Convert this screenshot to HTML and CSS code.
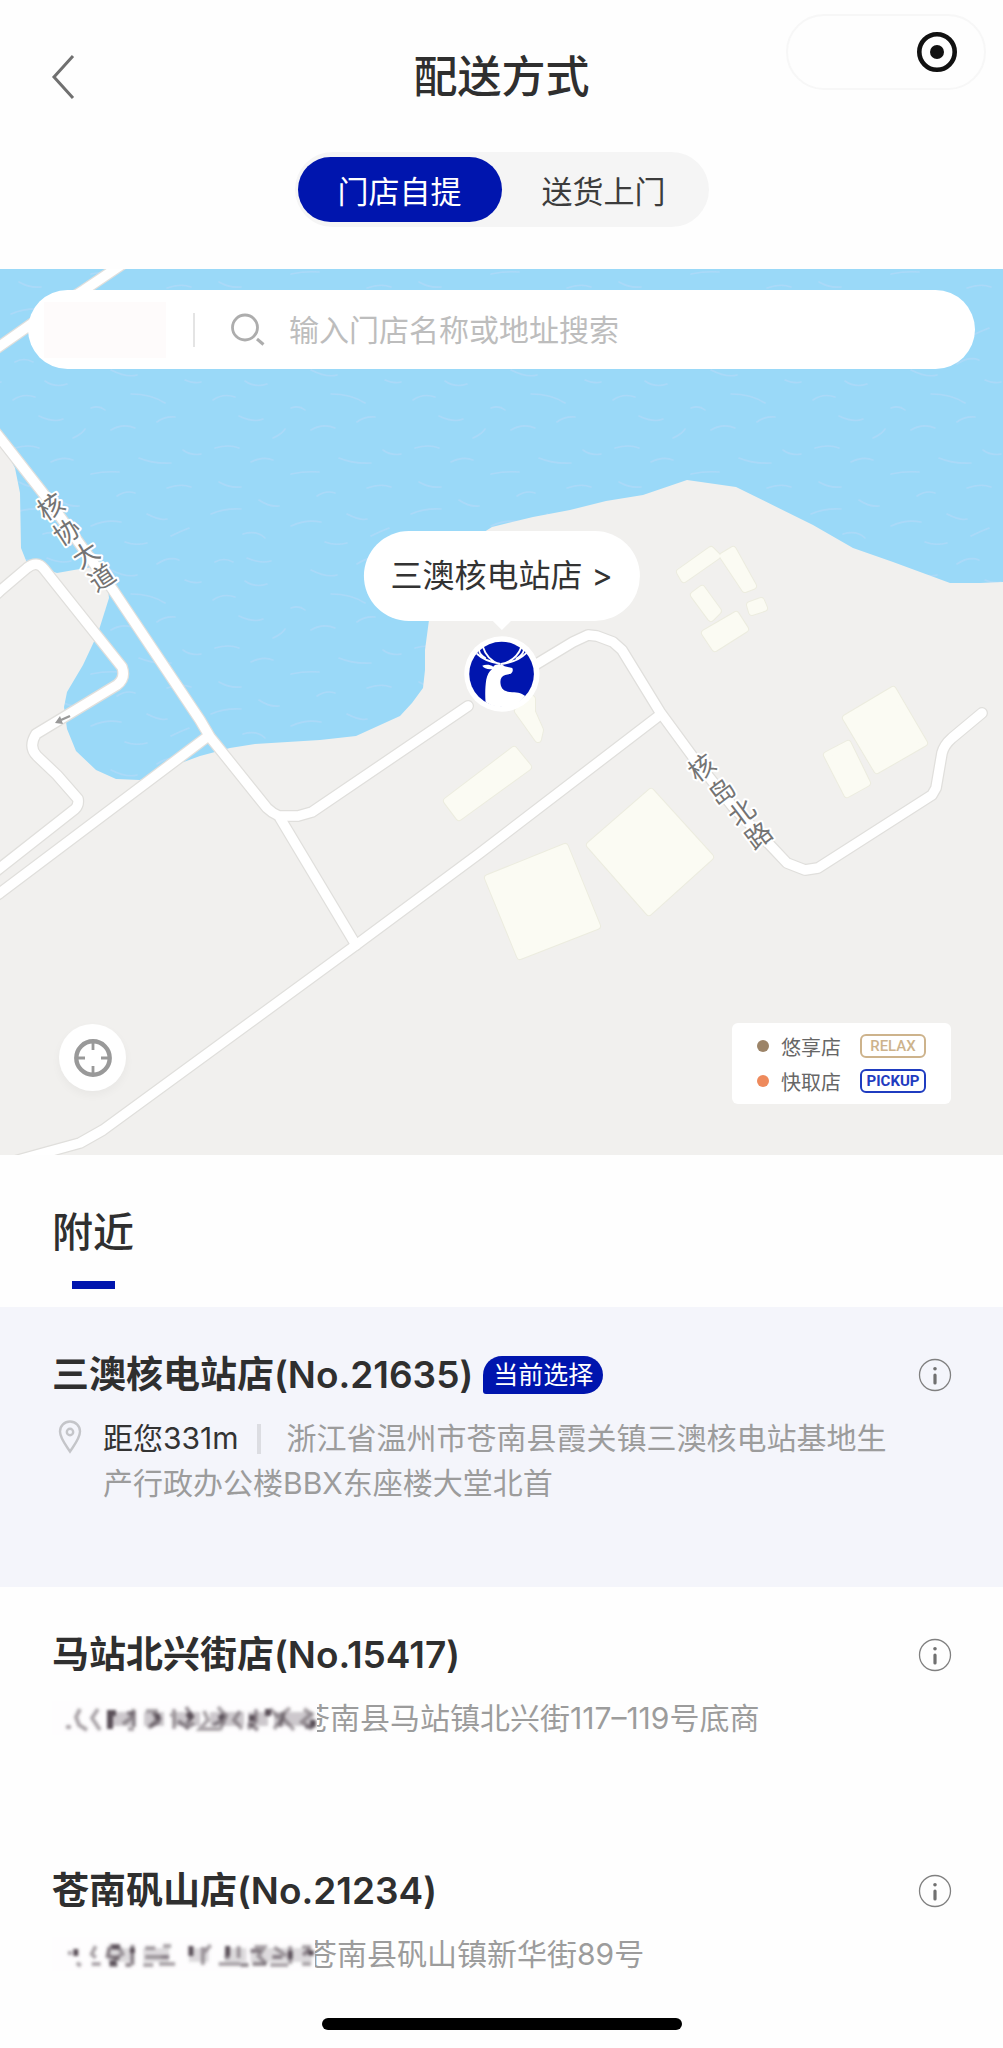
FILE: index.html
```html
<!DOCTYPE html>
<html lang="zh-CN">
<head>
<meta charset="utf-8">
<meta name="viewport" content="width=device-width, initial-scale=1">
<title>配送方式</title>
<link rel="stylesheet" href="styles.css">
</head>
<body>
<svg class="defs" aria-hidden="true">
  <defs>
    <symbol id="icon-info" viewBox="0 0 34 34">
      <circle cx="17" cy="17" r="15.5" fill="none" stroke="#808080" stroke-width="1.3"/>
      <circle cx="17" cy="10.8" r="1.8" fill="#707070"/>
      <path d="M17 17v8" stroke="#707070" stroke-width="3.2" stroke-linecap="round"/>
    </symbol>
    <filter id="soft" x="-5%" y="-20%" width="110%" height="140%"><feGaussianBlur stdDeviation="1.7"/></filter>
  </defs>
</svg>

<header class="header">
  <div class="nav">
    <button class="back" type="button" aria-label="返回">
      <svg viewBox="0 0 26 46" width="26" height="46"><path d="M23 2L4 23l19 21" fill="none" stroke="#707070" stroke-width="3"/></svg>
    </button>
    <h1 class="title">配送方式</h1>
  </div>
  <div class="capsule">
    <button class="capsule-close" type="button" aria-label="关闭">
      <svg viewBox="0 0 42 42" width="42" height="42"><circle cx="21" cy="21" r="17.7" fill="none" stroke="#111" stroke-width="4.6"/><circle cx="21" cy="21" r="7" fill="#111"/></svg>
    </button>
  </div>
  <div class="tabs">
    <button class="tab tab-active" type="button">门店自提</button>
    <button class="tab" type="button">送货上门</button>
  </div>
</header>

<section class="map">
  <svg class="map-canvas" viewBox="0 269 1003 886" preserveAspectRatio="xMidYMid slice" aria-hidden="true">
    <defs>
      <pattern id="waves" width="200" height="200" patternUnits="userSpaceOnUse" patternTransform="translate(7 350)">
        <rect width="200" height="200" fill="#9ad9f8"/>
        <g fill="none" stroke="#b0d9f8" stroke-width="1.6" stroke-linecap="round" opacity=".75">
          <path d="M8 12q9-5 18 0M40 8q14 6 24 3M104 20q16 8 26 5M150 14q12-8 22-4M178 30q9 4 16 2M60 34q-12 4-22-3M124 44q20 0 34 9M6 50q10-7 22-3M84 58q8-3 14 2M32 66q15 7 24 3M150 72q8-6 18-5M104 80q12-7 24-2M66 88q9-4 12-9M8 98q14-4 24 0M176 100q8 6 18 4M132 108q14 6 32 5M44 112q12-6 22-2M84 124q14-3 28-2M12 132q10 6 22 5M160 138q14-5 24-1M110 146q9-6 18-3M52 150q10 7 20 6M4 164q14-6 30-5M140 164q14 7 20 5M84 176q15-7 30-4M182 178q-10 4-18 8M36 184q14-4 22 4M118 192q10 4 22 1"/>
        </g>
      </pattern>
      <g id="road-lines">
        <path d="M-10 353L40 318 84 290 130 259"/>
        <path d="M-10 425L0 438 43 493 113 590 200 720 210 737 267 808Q272 813 279 816L298 816 312 812 468 706"/>
        <path d="M280 818L356 945"/>
        <path d="M-10 900L0 893 207 737"/>
        <path d="M-10 600L0 591 27 568Q37 560 44 569L122 667Q126 678 117 685L36 734Q28 747 37 756L57 775 78 799Q79 805 75 809L0 868 -10 876"/>
        <path d="M-10 1168L40 1154 80 1143 103 1130 356 945 480 853 660 715"/>
        <path d="M530 668L573 642 588 635 597 636 613 642 622 650 660 712 693 757 733 807 770 845 787 863 805 870 818 868 932 795 936 788 942 753Q944 745 952 738L982 713"/>
      </g>
      <g id="buildings">
        <path d="M711 550L717 556 684 579 680 572Z"/>
        <path d="M723 556L733 550 753 586 745 589Z"/>
        <path d="M694 595L702 589 718 611 711 618Z"/>
        <path d="M750 605L761 601 764 608 752 612Z"/>
        <path d="M705 633L736 615 745 629 715 648Z"/>
        <path d="M846 718L893 690 924 743 877 770Z"/>
        <path d="M827 755L848 744 867 783 847 794Z"/>
        <path d="M651 792L710 857 649 912 590 845Z"/>
        <path d="M488 878L565 847 597 926 520 956Z"/>
        <path d="M514 750L528 767 459 817 447 801Z"/>
        <path d="M518 711L532 699 532 712 540 730 538 739Z"/>
      </g>
    </defs>
    <rect y="269" width="1003" height="886" fill="#f1f0ee"/>
    <path fill="url(#waves)" d="M0 269H1003V582L980 583 950 583 893 562 853 548 813 525 736 487 687 480 643 495 606 501 570 510 533 517 492 527 440 560 429 620 425 650 425 670 423 688 412 703 400 716 356 736 320 740 255 744 230 748 200 756 181 763 140 780 116 779 96 770 76 751 67 729 64 707 67 692 83 665 98 633 109 598 105 565 74 570 57 573 27 563 21 548 20 493 15 468 0 440Z"/>
    <use href="#buildings" fill="none" stroke="#ececdf" stroke-width="8" stroke-linejoin="round"/>
    <use href="#buildings" fill="#fbfbf3" stroke="#fbfbf3" stroke-width="6" stroke-linejoin="round"/>
    <use href="#road-lines" fill="none" stroke="#e0dfdc" stroke-width="12" stroke-linejoin="round" stroke-linecap="round"/>
    <use href="#road-lines" fill="none" stroke="#fff" stroke-width="9.500" stroke-linejoin="round" stroke-linecap="round"/>
    <path d="M70 716l-9 4" stroke="#999" stroke-width="2.4"/><path d="M55 723l5-7 3 8z" fill="#999"/>
    <g class="road-name">
      <text transform="translate(51 507) rotate(-33)" y="9">核</text>
      <text transform="translate(67 532) rotate(-33)" y="9">协</text>
      <text transform="translate(86 555) rotate(-33)" y="9">大</text>
      <text transform="translate(102 578) rotate(-33)" y="9">道</text>
      <text transform="translate(702 768) rotate(-37)" y="9">核</text>
      <text transform="translate(722 792) rotate(-37)" y="9">岛</text>
      <text transform="translate(742 813) rotate(-37)" y="9">北</text>
      <text transform="translate(759 836) rotate(-37)" y="9">路</text>
    </g>
  </svg>

  <form class="search">
    <span class="city"></span>
    <svg class="search-icon" viewBox="0 0 34 34" width="34" height="34"><circle cx="14" cy="14.5" r="12.5" fill="none" stroke="#adadad" stroke-width="2.8"/><path d="M26 26l6.500 5.500" stroke="#adadad" stroke-width="3"/></svg>
    <input class="search-input" type="search" aria-label="搜索门店" placeholder="输入门店名称或地址搜索">
  </form>

  <div class="pin">
    <a class="bubble" href="#store-21635">三澳核电站店 &gt;</a>
    <svg class="marker" viewBox="12 14 228 228" width="76" height="76" aria-hidden="true">
      <circle cx="126" cy="128" r="113" fill="#fff"/>
      <circle cx="125" cy="128" r="97" fill="#0015ae"/>
      <g fill="none" stroke="#fff" stroke-linecap="round">
        <path d="M118 98C96 90 78 76 69 46M119 97C92 92 68 84 52 68M76 80C64 72 58 64 58 58" stroke-width="5.500"/>
        <path d="M124 98C150 92 172 80 184 48M124 98C156 94 180 84 198 66M170 82C184 74 190 66 192 56" stroke-width="5.500"/>
      </g>
      <path fill="#fff" d="M100 106C90 99 77 99 67 103C72 111 84 115 97 113C87 120 82 132 79 145C76 165 75 188 77 212C96 226 120 228 142 226C165 222 184 210 196 194C184 184 168 183 150 182C132 180 124 172 122 158C120 144 124 134 136 131L153 127C159 122 160 115 157 110L134 105C128 98 108 95 100 106Z"/>
    </svg>
  </div>

  <div class="map-footer">
    <button class="locate" type="button" aria-label="定位">
      <svg viewBox="0 0 38 38" width="38" height="38" fill="none" stroke="#999"><circle cx="19" cy="19" r="16.700" stroke-width="4.400"/><path d="M19 3v8M19 27v8M3 19h8M27 19h8" stroke-width="2.800"/></svg>
    </button>
    <ul class="legend">
      <li><i class="dot dot-relax"></i><span>悠享店</span><b class="tag tag-relax">RELAX</b></li>
      <li><i class="dot dot-pickup"></i><span>快取店</span><b class="tag tag-pickup">PICKUP</b></li>
    </ul>
  </div>
</section>

<main class="stores">
  <h2 class="section-title">附近</h2>

  <article class="store store-current" id="store-21635">
    <div class="store-head">
      <h3 class="store-name">三澳核电站店(No.21635)</h3>
      <span class="badge">当前选择</span>
      <button class="info" type="button" aria-label="门店详情"><svg width="34" height="34"><use href="#icon-info"/></svg></button>
    </div>
    <div class="store-address">
      <svg class="pin-icon" viewBox="0 0 24 34" width="24" height="34" fill="none" stroke="#c4c5c9" stroke-width="2.400"><path d="M12 31.500C7 24 2 18 2 11.500A10 10 0 0 1 22 11.500C22 18 17 24 12 31.500Z"/><circle cx="12" cy="12" r="3.200"/></svg>
      <p class="address"><span class="distance">距您331m</span>浙江省温州市苍南县霞关镇三澳核电站基地生产行政办公楼BBX东座楼大堂北首</p>
    </div>
  </article>

  <article class="store">
    <div class="store-head">
      <h3 class="store-name">马站北兴街店(No.15417)</h3>
      <button class="info" type="button" aria-label="门店详情"><svg width="34" height="34"><use href="#icon-info"/></svg></button>
    </div>
    <div class="store-address">
      <svg class="redacted" viewBox="0 0 265 34" width="265" height="34" aria-hidden="true">
        <rect width="265" height="34" fill="#fefdfe"/>
        <g filter="url(#soft)" fill="none" stroke="#5a5058" stroke-width="4">
          <path opacity=".3" stroke-width="14" d="M56 18h26M92 18h20M122 18h26M158 18h34M196 18h20M222 18h40"/>
          <path opacity=".5" d="M14 26h5M28 8l-4 8 3 8 8 5M46 8l-6 9 8 12M82 8l-4 10-7 5M76 28h6M94 10h10v10l-8 7M122 8v20M118 14h6M152 10l4 9-8 9h20M166 6l8 9-6 14M188 10l-6 9 8 9M204 8v12l-8 8M218 8l8 8 12-9M222 28l9-11 11 12M252 8l7 5-9 8 10 7M134 28l8-6"/>
          <path opacity=".6" d="M101 12l8 7M98 26l10-6M134 6l6 9-5 8M161 24l10-5M126 20l10 7M196 22l10 7M232 12l-4 14M253 26h9M75 12h7v14"/>
          <path stroke-width="6" d="M58 9v19M56 12h8M104 16h4M136 12l4 6M168 14l3 4M200 14v6M216 8v7M261 19v7"/>
        </g>
      </svg>
      <p class="address">苍南县马站镇北兴街117–119号底商</p>
    </div>
  </article>

  <article class="store">
    <div class="store-head">
      <h3 class="store-name">苍南矾山店(No.21234)</h3>
      <button class="info" type="button" aria-label="门店详情"><svg width="34" height="34"><use href="#icon-info"/></svg></button>
    </div>
    <div class="store-address">
      <svg class="redacted redacted-short" viewBox="0 0 265 34" width="263" height="34" aria-hidden="true">
        <rect width="265" height="34" fill="#fefdfe"/>
        <g filter="url(#soft)" fill="none" stroke="#5a5058" stroke-width="4">
          <path opacity=".2" stroke-width="14" d="M56 18h26M92 18h26M138 18h20M174 18h22M200 18h62"/>
          <path opacity=".5" d="M18 18v-4M25 26l4 3M44 9l-4 8 4 4M40 27h9M58 9h9l4 8-9 5M94 11h10M94 20h16M92 28h10M112 9h8M108 27h16M152 10v18M160 8l-8 8M168 27h22M188 9v12M204 10h10l-6 9 8 8M224 10l12 9M220 28h18M240 9v18M252 10h9M252 27h9"/>
          <path opacity=".65" d="M58 10l-2 9 12 3M58 28h8M81 8v20M74 28h6M110 20h8M174 20h5M190 28h8M200 14h10M202 27h14M222 20h10M253 18l7-6"/>
          <path stroke-width="5" d="M24 12v7M58 26h7M60 10h8M81 11v5M140 9v10M177 9v10M240 14v8M258 16h6"/>
        </g>
      </svg>
      <p class="address">苍南县矾山镇新华街89号</p>
    </div>
  </article>
</main>
<div class="home-bar"></div>
</body>
</html>
```

FILE: styles.css
```css
* { box-sizing: border-box; }

body {
  position: relative;
  min-height: 100vh;
  margin: 0;
  background: #fefefe;
  color: #2f2f2f;
  font-family: Inter, "Noto Sans CJK SC", sans-serif;
}

h1, h2, h3, p, ul { margin: 0; padding: 0; }
ul { list-style: none; }
button {
  padding: 0;
  border: 0;
  background: none;
  color: inherit;
  font: inherit;
  cursor: pointer;
}
svg { display: block; flex: none; }
.defs { position: absolute; width: 0; height: 0; }

/* Header */
.header { position: relative; padding: 47px 0 42px; }
.nav {
  display: grid;
  grid-template-columns: 1fr auto 1fr;
  align-items: center;
  height: 60px;
  padding: 0 50px;
}
.back { justify-self: start; }
.title { font-size: 44px; line-height: 60px; font-weight: 500; }
.capsule {
  position: absolute;
  top: 14px;
  right: 17px;
  display: flex;
  align-items: center;
  justify-content: flex-end;
  width: 200px;
  height: 76px;
  padding-right: 26px;
  border: 2px solid #f7f7f7;
  border-radius: 38px;
}
.tabs {
  display: flex;
  width: fit-content;
  margin: 45px auto 0;
  padding: 5px 3px;
  border-radius: 38px;
  background: #f5f5f5;
}
.tab {
  height: 65px;
  padding: 0 40px;
  border-radius: 33px;
  font-size: 31px;
  color: #3c3c3c;
}
.tab-active { background: #0015ae; color: #fff; }

/* Map */
.map {
  position: relative;
  display: flex;
  flex-direction: column;
  justify-content: space-between;
  aspect-ratio: 1003 / 886;
  padding: 21px 28px 51px;
  overflow: hidden;
}
.map-canvas { position: absolute; inset: 0; width: 100%; height: 100%; }
.road-name text {
  fill: #747474;
  stroke: #fff;
  stroke-width: 4px;
  stroke-linejoin: round;
  paint-order: stroke;
  font-size: 26px;
  text-anchor: middle;
}
.search {
  position: relative;
  display: flex;
  align-items: center;
  height: 79px;
  padding: 0 32px 0 16px;
  border-radius: 40px;
  background: #fff;
}
.city { width: 122px; height: 56px; background: #fefbfb; }
.search-icon {
  box-sizing: content-box;
  margin-left: 27px;
  padding-left: 36px;
  border-left: 2px solid #e4e4e4;
}
.search-input {
  flex: 1;
  min-width: 0;
  margin-left: 24px;
  padding: 0;
  border: 0;
  outline: 0;
  background: none;
  font: inherit;
  font-size: 30px;
}
.search-input::placeholder { color: #bdbdbd; opacity: 1; }

.pin {
  position: absolute;
  left: 50%;
  top: 50%;
  display: flex;
  flex-direction: column;
  align-items: center;
  gap: 15px;
  transform: translate(-50%, -100%);
}
.bubble {
  position: relative;
  padding: 0 27px;
  border-radius: 45px;
  background: #fff;
  color: #333;
  font-size: 32px;
  line-height: 90px;
  white-space: nowrap;
  text-decoration: none;
}
.bubble::after {
  content: "";
  position: absolute;
  top: 100%;
  left: 50%;
  margin-left: -9px;
  border: 9px solid transparent;
  border-top-color: #fff;
}

.map-footer {
  position: relative;
  display: flex;
  align-items: center;
  justify-content: space-between;
  padding: 0 24px 0 31px;
}
.locate {
  display: grid;
  place-items: center;
  width: 67px;
  height: 67px;
  margin-top: -12px;
  border-radius: 50%;
  background: #fff;
  box-shadow: 0 4px 10px rgba(0, 0, 0, .04);
}
.legend {
  display: grid;
  gap: 11px;
  padding: 11px 25px;
  border-radius: 6px;
  background: #fff;
}
.legend li {
  display: flex;
  align-items: center;
  height: 24px;
  color: #666;
  font-size: 20px;
}
.dot { width: 12px; height: 12px; margin-right: 12px; border-radius: 50%; }
.dot-relax { background: #9c8468; }
.dot-pickup { background: #ee8a5c; }
.tag {
  width: 66px;
  margin-left: 19px;
  border: 2px solid;
  border-radius: 6px;
  font: 500 15px/20px Roboto, sans-serif;
  text-align: center;
}
.tag-relax { color: #cdb38c; }
.tag-pickup { color: #1f3cc0; font-weight: 700; }

/* Store list */
.section-title {
  width: fit-content;
  margin-left: 52px;
  padding-top: 47px;
  font-size: 41px;
  line-height: 60px;
  font-weight: 500;
}
.section-title::after {
  content: "";
  display: block;
  width: 43px;
  height: 8px;
  margin: 19px auto 18px;
  background: #0015ae;
}
.store { padding: 45px 51px 82px 52px; }
.store-current { padding-bottom: 81px; background: #f4f5fb; }
.store:last-child { padding-bottom: 59px; }
.store-head { display: flex; align-items: center; height: 46px; }
.store-name { font-size: 37px; line-height: 46px; font-weight: 600; }
.badge {
  margin-left: 10px;
  padding: 0 10px;
  border-radius: 19px 19px 19px 3px;
  background: #0015ae;
  color: #fff;
  font-size: 25px;
  line-height: 38px;
}
.info { margin-left: auto; }
.store-address {
  display: flex;
  margin-top: 18px;
  padding-right: 46px;
}
.address {
  color: #9c9c9c;
  font-size: 30px;
  line-height: 45px;
}
.pin-icon { margin: 4px 21px 0 6px; }
.distance {
  display: inline-block;
  margin-right: 26px;
  padding-right: 22px;
  background: linear-gradient(#dcdde2, #dcdde2) right center / 4px 30px no-repeat;
  color: #333;
}
.redacted { position: relative; z-index: 1; margin: 5px -17px 0 0; }
.redacted-short { margin-right: -8px; }
.home-bar {
  position: absolute;
  bottom: 18px;
  left: 50%;
  width: 360px;
  height: 12px;
  border-radius: 6px;
  background: #000;
  transform: translateX(-50%);
}
```
